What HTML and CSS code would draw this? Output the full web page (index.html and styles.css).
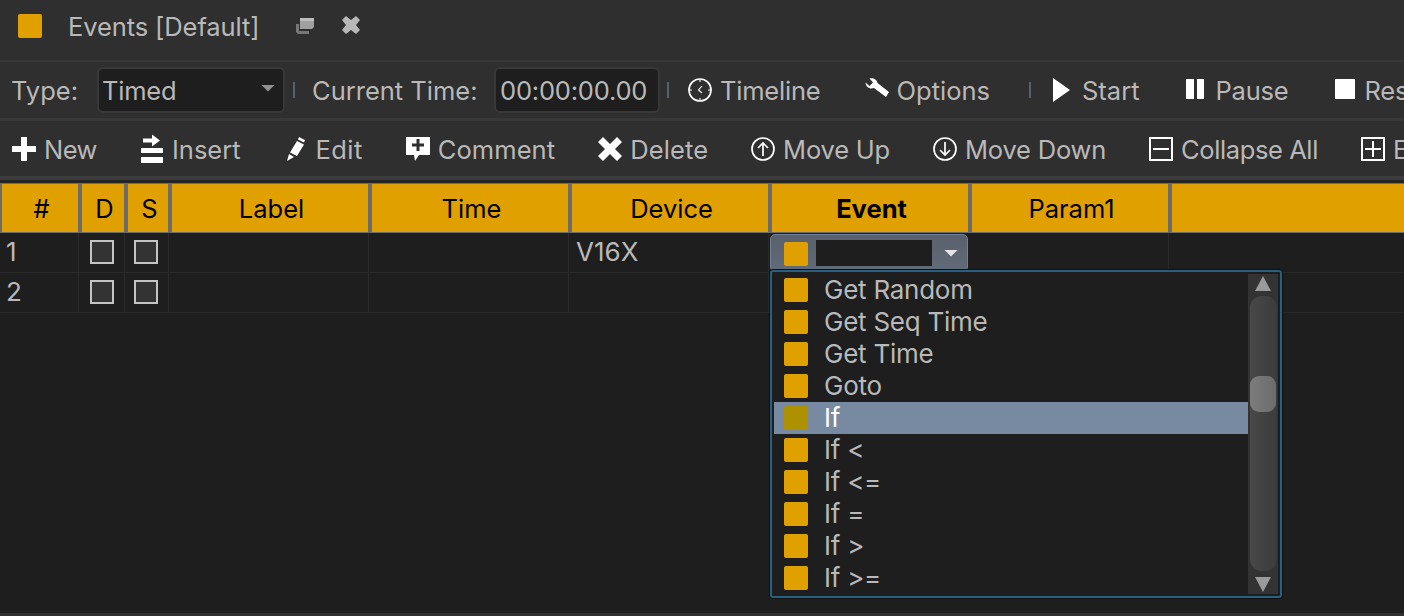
FILE: index.html
```html
<!DOCTYPE html>
<html lang="en">
<head>
<meta charset="utf-8">
<title>Events [Default]</title>
<link rel="stylesheet" href="styles.css">
</head>
<body>
<div class="app">
  <header class="titlebar">
    <span class="swatch title-swatch"></span>
    <span class="title-text">Events [Default]</span>
    <svg class="title-icon restore" width="18" height="18" viewBox="0 0 18 18"><path d="M0 7h3v7h10v3H2l-2-2z" fill="#777"/><path d="M4 3 6 1h12v9l-2 2H4z" fill="#a0a0a0"/><rect x="4" y="1" width="14" height="3" fill="#bdbdbd"/></svg>
    <svg class="title-icon close" width="18" height="18" viewBox="0 0 18 18"><path d="M0 4 4 0l5 4 5-4 4 4-4 5 4 5-4 4-5-4-5 4-4-4 4-5z" fill="#b8b8b8"/></svg>
  </header>

  <div class="toolbar toolbar-top">
    <span class="label type-label">Type:</span>
    <div class="field type-field"><span>Timed</span><i class="caret"></i></div>
    <i class="sep sep-a"></i>
    <span class="label time-label">Current Time:</span>
    <div class="field time-field"><span>00:00:00.00</span></div>
    <i class="sep sep-b"></i>
    <div class="tool"><svg width="24" height="24" viewBox="0 0 24 24"><circle cx="12" cy="12" r="11" fill="none" stroke="#fff" stroke-width="1.7"/><path d="M14 8l-3.5 4 3.5 3M12 2v2M12 20v2M2 12h2M20 12h2" fill="none" stroke="#fff" stroke-width="1.1"/></svg><span>Timeline</span></div>
    <div class="tool"><svg width="24" height="24" viewBox="0 0 24 24"><path d="M.5 4.500 4.500 8 8 4.500 4.500.5C8-.5 12 1.500 12.500 5L24 14l-3 5L9 10C5 11.500 1 9.500.5 4.500z" fill="#fff"/></svg><span class="ls-0">Options</span></div>
    <i class="sep sep-c"></i>
    <div class="tool"><svg width="24" height="24" viewBox="0 0 24 24"><path d="M3 0 20 12 3 24z" fill="#fff"/></svg><span class="ls-0">Start</span></div>
    <div class="tool"><svg width="24" height="24" viewBox="0 0 24 24"><path d="M3 1h8v20H3zM14 1h7v20h-7z" fill="#fff"/></svg><span>Pause</span></div>
    <div class="tool"><svg width="24" height="24" viewBox="0 0 24 24"><rect x="2" y="1" width="20" height="20" fill="#fff"/></svg><span>Reset</span></div>
  </div>

  <div class="toolbar toolbar-actions">
    <div class="tool"><svg width="24" height="24" viewBox="0 0 24 24"><path d="M9 0h6v9h9v6h-9v9H9v-9H0V9h9z" fill="#fff"/></svg><span class="ls-narrow">New</span></div>
    <div class="tool"><svg width="24" height="24" viewBox="0 0 24 24"><path d="M3 1.500h9v-4l8 6-8 6v-4H3zM1 11h22v5H1zM1 20h22v6H1z" fill="#fff"/></svg><span class="ls-0">Insert</span></div>
    <div class="tool"><svg width="24" height="24" viewBox="0 0 24 24"><path d="M15 0l6 3-1 2.500-6-3zM13 4l7 3.500-7 11.500-7-3.500zM5 17l5 3-7 4z" fill="#fff"/></svg><span class="ls-wide">Edit</span></div>
    <div class="tool"><svg width="24" height="24" viewBox="0 0 24 24"><path d="M0 0h24v18H13l-4 6-1-6H0zM10.500 2v4.500H6v3h4.500V14h3V9.500H18v-3h-4.500V2z" fill="#fff" fill-rule="evenodd"/></svg><span class="ls-open">Comment</span></div>
    <div class="tool"><svg width="24" height="24" viewBox="0 0 24 24"><path d="M5 0l7 7 7-7 5 5-7 7 7 7-5 5-7-7-7 7-5-5 7-7-7-7z" fill="#fff"/></svg><span class="ls-open">Delete</span></div>
    <div class="tool"><svg width="24" height="24" viewBox="0 0 24 24"><circle cx="12" cy="12" r="11" fill="none" stroke="#fff" stroke-width="1.700"/><path d="M12 19V6M7 11l5-5 5 5" fill="none" stroke="#fff" stroke-width="1.700"/></svg><span>Move Up</span></div>
    <div class="tool"><svg width="24" height="24" viewBox="0 0 24 24"><circle cx="12" cy="12" r="11" fill="none" stroke="#fff" stroke-width="1.700"/><path d="M12 5v13M7 13l5 5 5-5" fill="none" stroke="#fff" stroke-width="1.700"/></svg><span>Move Down</span></div>
    <div class="tool"><svg width="24" height="24" viewBox="0 0 24 24"><rect x="1" y="1" width="22" height="22" fill="none" stroke="#fff" stroke-width="2"/><path d="M4 12h16" stroke="#fff" stroke-width="2"/></svg><span class="ls-tight">Collapse All</span></div>
    <div class="tool"><svg width="24" height="24" viewBox="0 0 24 24"><rect x="1" y="1" width="22" height="22" fill="none" stroke="#fff" stroke-width="2"/><path d="M4 12h16M12 4v16" stroke="#fff" stroke-width="2"/></svg><span>Expand All</span></div>
  </div>

  <div class="table-gap"></div>

  <main class="table">
    <div class="thead">
      <div>#</div><div>D</div><div>S</div><div>Label</div><div>Time</div><div>Device</div><div class="active">Event</div><div>Param1</div><div></div>
    </div>
    <div class="row">
      <div class="cell num">1</div>
      <div class="cell check check-d"><i class="box"></i></div>
      <div class="cell check check-s"><i class="box"></i></div>
      <div class="cell"></div>
      <div class="cell"></div>
      <div class="cell device">V16X</div>
      <div class="cell event-cell">
        <div class="combo"><span class="swatch"></span><span class="combo-input"></span><i class="combo-caret"></i></div>
      </div>
      <div class="cell"></div>
      <div class="cell last"></div>
    </div>
    <div class="row">
      <div class="cell num">2</div>
      <div class="cell check check-d"><i class="box"></i></div>
      <div class="cell check check-s"><i class="box"></i></div>
      <div class="cell"></div>
      <div class="cell"></div>
      <div class="cell"></div>
      <div class="cell"></div>
      <div class="cell"></div>
      <div class="cell last"></div>
    </div>
  </main>

  <div class="bottom-strip"></div>

  <div class="dropdown">
    <ul class="list">
      <li><span class="swatch"></span>Get Random</li>
      <li><span class="swatch"></span>Get Seq Time</li>
      <li><span class="swatch"></span>Get Time</li>
      <li><span class="swatch"></span>Goto</li>
      <li class="selected"><span class="swatch"></span>If</li>
      <li><span class="swatch"></span>If &lt;</li>
      <li><span class="swatch"></span>If &lt;=</li>
      <li><span class="swatch"></span>If =</li>
      <li><span class="swatch"></span>If &gt;</li>
      <li><span class="swatch"></span>If &gt;=</li>
    </ul>
    <div class="scrollbar">
      <i class="arrow up"></i>
      <div class="track"><div class="thumb"></div></div>
      <i class="arrow down"></i>
    </div>
  </div>
</div>
</body>
</html>
```
FILE: styles.css
```css
* { box-sizing: border-box; }
html, body { margin: 0; height: 100%; overflow: hidden; background: #1e1e1e; }
body { font-family: Inter, "Liberation Sans", sans-serif; font-size: 26px; color: #b9b9b9; }
i { display: block; font-style: normal; }

.app { position: relative; width: 1404px; height: 616px; display: flex; flex-direction: column; overflow: hidden; }

.swatch { display: block; flex: none; width: 24px; height: 24px; background: #e0a000; border-radius: 2px; }

.titlebar { height: 60px; flex: none; display: flex; align-items: center; padding: 0 0 8px 18px; background: #2f2f2f; }
.title-text { margin-left: 26px; width: 191px; padding-top: 1px; font-size: 25.5px; letter-spacing: -0.1px; white-space: nowrap; }
.title-icon { flex: none; }
.restore { margin-left: 37px; }
.close { margin-left: 28px; margin-top: -2px; }

.toolbar { flex: none; display: flex; align-items: center; background: #2f2f2f; white-space: nowrap; overflow: hidden; font-size: 25.5px; letter-spacing: -0.2px; }
.ls-0 { letter-spacing: 0; }
.ls-open { letter-spacing: 0.1px; }
.ls-wide { letter-spacing: 0.4px; }
.ls-tight { letter-spacing: -0.4px; }
.ls-narrow { letter-spacing: -0.5px; }
.toolbar-top { height: 56px; margin-top: 2px; padding-left: 11px; box-shadow: 0 -2px 0 #383838; }
.toolbar-actions { height: 55px; margin-top: 3px; padding: 1px 0 0 12px; gap: 43px; box-shadow: 0 -3px 0 #383838; }

.label { flex: none; letter-spacing: 0; }
.type-label { width: 67px; }
.time-label { width: 164px; }
.field { flex: none; height: 46px; background: #1e1e1e; border: 2px solid #383838; border-radius: 6px; display: flex; align-items: center; }
.type-field { width: 188px; margin-left: 19px; padding: 0 8px 0 3px; justify-content: space-between; }
.time-field { width: 166px; margin-left: 18px; padding-left: 4px; }
.caret { width: 14px; height: 7px; margin-top: -4px; background: #8f8f8f; clip-path: polygon(0 0, 100% 0, 50% 100%); }

.sep { flex: none; width: 2px; height: 16px; background: #56606e; }
.sep-a { margin: 0 17px 0 8px; }
.sep-b { margin: 0 19px 0 7px; }
.sep-c { margin: 0 19px 0 39px; }

.tool { flex: none; display: flex; align-items: center; gap: 8px; }
.tool svg { flex: none; display: block; overflow: visible; }
.toolbar-top .tool + .tool { margin-left: 44px; }

.table-gap { flex: none; height: 7px; background: linear-gradient(#3c3c3c 0 4px, #232323 4px); }

.table { flex: 1; background: #1e1e1e; }
.thead { display: grid; grid-template-columns: 76px 42px 40px 196px 196px 196px 196px 196px 1fr; gap: 4px; height: 50px; padding: 1px 0 1px 2px; background: #6c6c6c; }
.thead div { background: #e0a000; color: #000; display: flex; align-items: center; justify-content: center; padding-left: 3px; font-size: 25.5px; }
.thead .active { font-weight: 700; }

.row { display: grid; grid-template-columns: 79px 46px 44px 200px 200px 200px 200px 200px 1fr; height: 40px; }
.cell { border-right: 1px solid #2a2a2a; border-bottom: 1px solid #2a2a2a; display: flex; align-items: center; min-width: 0; padding-bottom: 3px; }
.cell.last { border-right: 0; }
.num { padding-left: 6px; }
.device { padding-left: 7px; }
.check { padding: 7px 0 0; align-items: flex-start; }
.check-d { padding-left: 11px; }
.check-s { padding-left: 9px; }
.box { width: 24px; height: 24px; border: 2px solid #c4c4c4; background: #333; }

.event-cell { padding: 0 0 0 1px; align-items: flex-start; border-right-color: transparent; }
.combo { width: 198px; height: 38px; margin-top: 1px; display: flex; align-items: center; padding: 0 0 0 13px; background: linear-gradient(#59606c, #626b78); border: 1px solid #6f8298; border-radius: 5px; }
.combo .swatch { margin-top: 2px; }
.combo-input { display: block; width: 116px; height: 26px; margin-left: 8px; background: #1e1e1e; }
.combo-caret { width: 14px; height: 7px; margin-left: 12px; background: #e4e4e4; clip-path: polygon(0 0, 100% 0, 50% 100%); }

.bottom-strip { flex: none; height: 3px; background: #303030; }

.dropdown { position: absolute; left: 770px; top: 270px; width: 512px; height: 328px; display: flex; background: #1e1e1e; border: 2px solid #29607f; border-radius: 3px; box-shadow: 0 0 0 1px #111; padding: 2px; }
.list { list-style: none; margin: 0; padding: 0; width: 474px; flex: none; letter-spacing: -0.25px; }
.list li { height: 32px; display: flex; align-items: center; padding: 0 0 2px 10px; gap: 16px; }
.list li .swatch { margin-top: 2px; }
.list .selected { background: #788aa2; color: #fff; }
.list .selected .swatch { background: #ad9100; }

.scrollbar { flex: none; width: 30px; background: #333; display: flex; flex-direction: column; align-items: center; padding: 2px 0; }
.arrow { flex: none; width: 16px; height: 15px; background: #9a9a9a; }
.arrow.up { clip-path: polygon(50% 0, 100% 100%, 0 100%); }
.arrow.down { clip-path: polygon(0 0, 100% 0, 50% 100%); }
.track { flex: 1; width: 27px; margin: 5px 0 6px; border-radius: 12px; background: linear-gradient(90deg, #484848, #3c3c3c); padding-top: 80px; }
.thumb { width: 26px; height: 36px; border-radius: 9px; background: linear-gradient(90deg, #7c7c7c, #6c6c6c); }
```
